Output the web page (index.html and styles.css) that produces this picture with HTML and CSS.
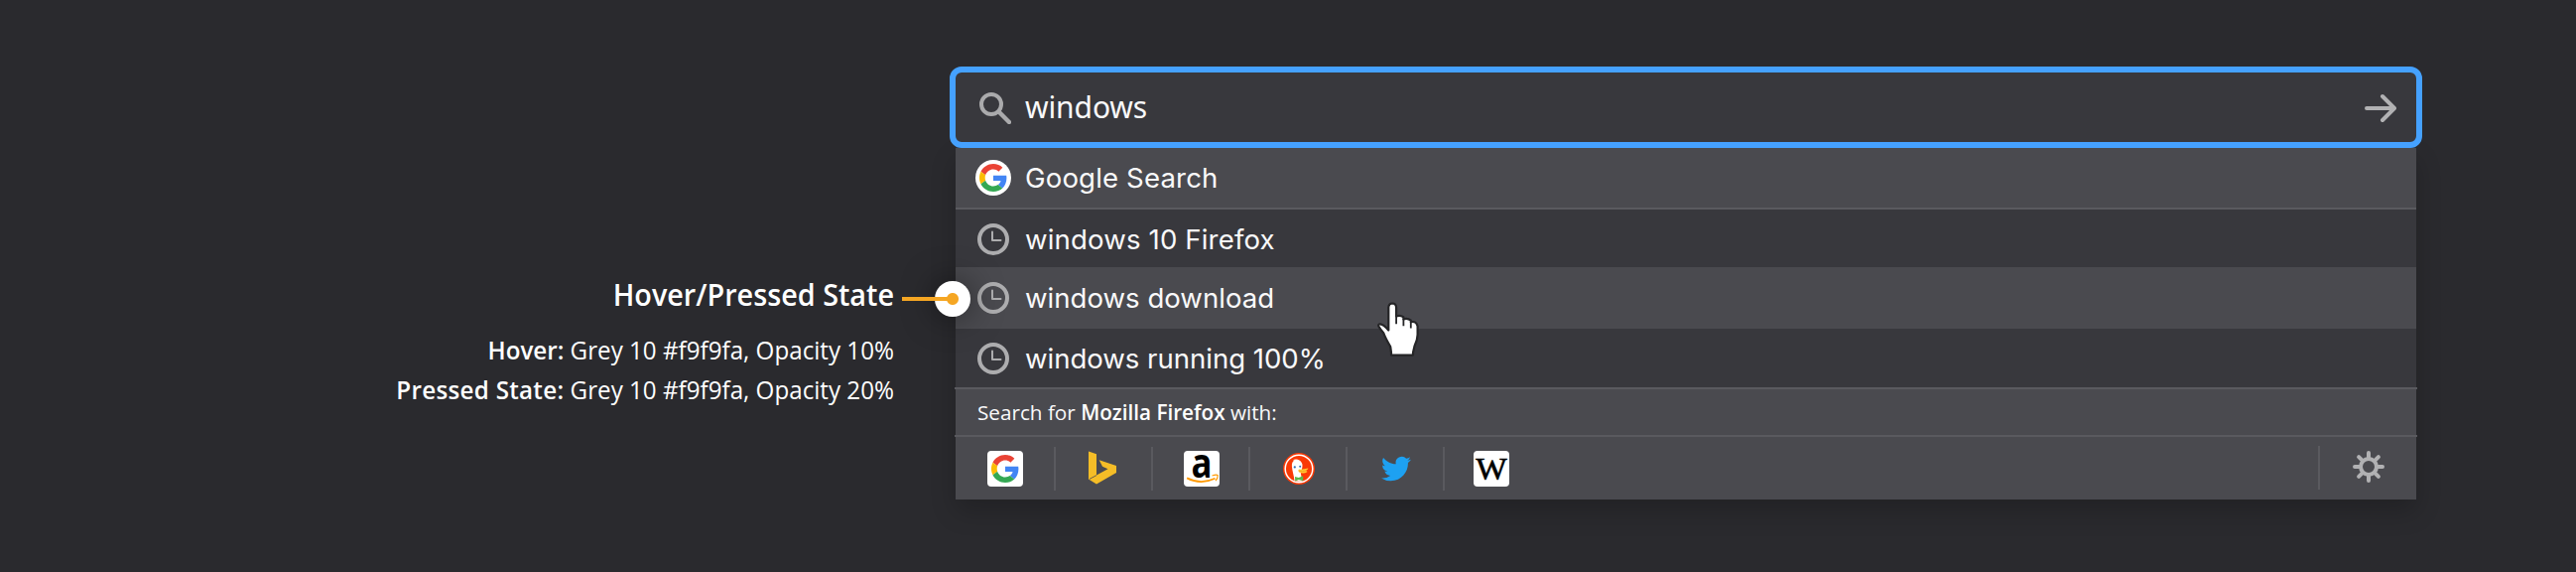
FILE: index.html
```
<!DOCTYPE html>
<html lang="en">
<head>
<meta charset="utf-8">
<title>Search suggestions: hover and pressed state</title>
<link rel="stylesheet" href="styles.css">
</head>
<body>
<svg width="0" height="0" class="defs">
  <defs>
    <symbol id="google" viewBox="0 0 48 48">
      <path fill="#ea4335" d="M24 9.5c3.54 0 6.71 1.22 9.21 3.6l6.85-6.85C35.9 2.38 30.47 0 24 0 14.62 0 6.51 5.38 2.56 13.22l7.98 6.19C12.43 13.72 17.74 9.5 24 9.5z"/>
      <path fill="#4285f4" d="M46.98 24.55c0-1.57-.15-3.09-.38-4.55H24v9.02h12.94c-.58 2.96-2.26 5.48-4.78 7.18l7.73 6c4.51-4.18 7.09-10.36 7.09-17.65z"/>
      <path fill="#fbbc05" d="M10.53 28.59c-.48-1.45-.76-2.99-.76-4.59s.27-3.14.76-4.59l-7.98-6.19C.92 16.46 0 20.12 0 24c0 3.88.92 7.54 2.56 10.78l7.97-6.19z"/>
      <path fill="#34a853" d="M24 48c6.48 0 11.93-2.13 15.89-5.81l-7.73-6c-2.15 1.45-4.92 2.3-8.16 2.3-6.26 0-11.57-4.22-13.47-9.91l-7.98 6.19C6.51 42.62 14.62 48 24 48z"/>
    </symbol>
    <symbol id="clock" viewBox="0 0 32 32">
      <circle cx="16" cy="16" r="14" fill="none" stroke="#adadaf" stroke-width="4"/>
      <path d="M15 8.5V17H23.5" fill="none" stroke="#adadaf" stroke-width="2" stroke-linecap="round" stroke-linejoin="round"/>
    </symbol>
  </defs>
</svg>
<main class="stage">
  <section class="note">
    <h1 class="note-title">Hover/Pressed State</h1>
    <p class="note-line"><b>Hover:</b> Grey 10 #f9f9fa, Opacity 10%</p>
    <p class="note-line"><b>Pressed State:</b> Grey 10 #f9f9fa, Opacity 20%</p>
  </section>
  <section class="search">
    <div class="searchbox">
      <svg class="icon" viewBox="0 0 32 32"><circle cx="12" cy="12" r="10" fill="none" stroke="#aaaaac" stroke-width="4"/><path d="M19.3 19.3L30 30" stroke="#aaaaac" stroke-width="4.4" stroke-linecap="round"/></svg>
      <span class="query">windows</span>
      <svg class="icon" viewBox="0 0 32 32"><path d="M2 16H29M18 4L30 16L18 28" fill="none" stroke="#b1b1b3" stroke-width="4" stroke-linecap="round" stroke-linejoin="round"/></svg>
    </div>
    <div class="panel">
      <div class="row row-engine"><span class="disc"><svg class="g" viewBox="0 0 48 48"><use href="#google"/></svg></span><span>Google Search</span></div>
      <div class="row row-first"><svg class="icon"><use href="#clock"/></svg><span>windows 10 Firefox</span></div>
      <div class="row row-hover"><svg class="icon"><use href="#clock"/></svg><span>windows download</span></div>
      <div class="row row-last"><svg class="icon"><use href="#clock"/></svg><span>windows running 100%</span></div>
      <div class="rule"></div>
      <div class="heading"><span>Search for <b>Mozilla Firefox</b> with:</span></div>
      <div class="rule"></div>
      <div class="engines">
        <div class="engine early"><span class="tile"><svg class="g" viewBox="0 0 48 48"><use href="#google"/></svg></span></div>
        <div class="engine early"><svg class="logo" viewBox="0 0 36 36"><path fill="#f5bd27" d="M4 .5L12 3.2V24.6L23.5 18.2L18 15.8L14.7 9.2L32 15V22L12 33.6L4 28.6Z"/><path d="M12 24.6L5 28.4" stroke="#4a4a4f" stroke-width=".8"/></svg></div>
        <div class="engine late"><span class="tile"><svg class="logo" viewBox="0 0 36 36"><text x="7.4" y="27" textLength="21" lengthAdjust="spacingAndGlyphs" class="amazon">a</text><path d="M3.2 27.4Q17 34.6 31.5 27.8" fill="none" stroke="#ff9900" stroke-width="1.8"/><path d="M28.5 25Q33 23.6 34.2 24.6Q34.4 27.6 32 30.2" fill="none" stroke="#ff9900" stroke-width="1.2"/></svg></span></div>
        <div class="engine late"><svg class="logo" viewBox="0 0 36 36">
          <circle cx="18" cy="18" r="16" fill="#f93a06"/><circle cx="18" cy="18" r="13.8" fill="none" stroke="#fff" stroke-width="1.5"/>
          <path fill="#fff" d="M13.4 29.8C13 25 11.2 20 10.9 15.6C10.6 12 12 10.3 13.6 9.8L11.9 9.2C15.2 7.4 20.6 9.4 21.4 13.6C21.9 16.2 20.8 19.5 19.8 22L21.3 30.4Q17.2 31.4 13.4 29.8Z"/>
          <path fill="#ffcc33" d="M18.1 18.6Q23 18.8 27.2 17.6Q28 18.5 24.6 20.1Q27 20.4 26.3 21.3Q22.6 23.6 18 21.5Q16.4 19.7 18.1 18.6Z"/>
          <path d="M18 20.3Q21.5 20.9 25 20.1" fill="none" stroke="#f29b1c" stroke-width=".8"/>
          <circle cx="13.8" cy="16.4" r="1.1" fill="#2d6eb5"/><circle cx="19.2" cy="15.8" r="1" fill="#2d6eb5"/>
          <path fill="#5cb84a" d="M14 26L17.7 27L22.2 25.3V30.3L17.8 29L14.2 30.5Z"/>
        </svg></div>
        <div class="engine late"><svg class="bird" viewBox="0 0 24 24"><path fill="#1da1f2" d="M23.953 4.57a10 10 0 01-2.825.775 4.958 4.958 0 002.163-2.723c-.951.555-2.005.959-3.127 1.184a4.92 4.92 0 00-8.384 4.482C7.69 8.095 4.067 6.13 1.64 3.162a4.822 4.822 0 00-.666 2.475c0 1.71.87 3.213 2.188 4.096a4.904 4.904 0 01-2.228-.616v.06a4.923 4.923 0 003.946 4.827 4.996 4.996 0 01-2.212.085 4.936 4.936 0 004.604 3.417 9.867 9.867 0 01-6.102 2.105c-.39 0-.779-.023-1.17-.067a13.995 13.995 0 007.557 2.209c9.053 0 13.998-7.496 13.998-13.985 0-.21 0-.42-.015-.63A9.935 9.935 0 0024 4.59z"/></svg></div>
        <div class="engine early"><span class="tile"><svg class="logo" viewBox="0 0 36 36"><text x="18" y="29" text-anchor="middle" textLength="31.5" lengthAdjust="spacingAndGlyphs" class="wiki">W</text></svg></span></div>
        <div class="settings"><svg class="icon" viewBox="0 0 32 32"><g fill="none" stroke="#b1b1b3" stroke-width="4"><circle cx="16" cy="16" r="8"/><path stroke-linecap="round" d="M16 2V7M16 25V30M2 16H7M25 16H30M6.1 6.1L9.6 9.6M22.4 22.4L25.9 25.9M6.1 25.9L9.6 22.4M22.4 9.6L25.9 6.1"/></g></svg></div>
      </div>
    </div>
  </section>
  <div class="callout"></div>
  <svg class="pointer" viewBox="0 0 46 60"><path fill="#fff" stroke="#252527" stroke-width="2.2" stroke-linejoin="round" d="M15 51L14.2 45Q9 36 7.4 31.5Q4 27.5 2.3 24.5Q1.6 22.2 4 22.3Q8 23 12.3 28.5V5.5Q12.6 1.6 16.2 1.5Q19.8 1.6 20.1 5.5V14.5Q23.5 12.8 27.4 15.2V17.4Q31.5 16 34.8 18.7V20.3Q40.3 18.8 41.6 24.5V33Q41.5 38.5 38.5 44.5L37 51V53.6H15Z"/><path d="M20.1 14V22.3M27.4 17V24.3M34.8 20V26.5" stroke="#252527" stroke-width="1.8"/></svg>
</main>
</body>
</html>
```
FILE: styles.css
```
* { box-sizing: border-box; margin: 0; padding: 0; }
body { background: #2a2a2e; color: #f9f9fa; font-family: Inter, "Noto Sans", sans-serif; overflow: hidden; }
.defs { position: absolute; }
.stage { position: relative; width: 2596px; height: 576px; display: flex; align-items: flex-start; }

.note { width: 901px; padding-top: 277px; text-align: right; color: #fff; font-family: "Open Sans", sans-serif; white-space: nowrap; }
.note-title { margin-bottom: 15px; font-size: 30px; line-height: 40px; font-weight: 600; transform: scaleX(.959); transform-origin: right; }
.note-line { font-size: 26px; line-height: 40px; transform: scaleX(.93); transform-origin: right; }
.note-line b { font-weight: 600; }
.note-line:last-child b { letter-spacing: .3px; }

.search { width: 1484px; margin: 67px 0 0 56px; }
.searchbox { position: relative; z-index: 1; display: flex; align-items: center; height: 82px; padding: 2px 20px 0 24px; border: 6px solid #45a1ff; border-radius: 12px; background: #38383d; }
.icon { display: block; flex: none; width: 32px; height: 32px; }
.query { margin: -4px auto 0 14px; font: 30px "Noto Sans", sans-serif; letter-spacing: -.1px; }

.panel { margin: 0 6px; background: #38383d; box-shadow: 0 12px 24px rgba(0, 0, 0, .2); }
.row { display: flex; align-items: center; gap: 16px; padding-left: 22px; font-size: 27.6px; white-space: nowrap; }
.row-engine { height: 62px; padding-left: 20px; gap: 14px; letter-spacing: .14px; background: #4a4a4f; border-bottom: 2px solid #5a5a5f; }
.row-first { height: 58px; padding-top: 2px; letter-spacing: .14px; }
.row-hover { height: 62px; background: #4a4a4f; }
.row-last { height: 59px; padding-top: 1px; letter-spacing: -.04px; }
.disc, .tile { display: grid; place-items: center; width: 36px; height: 36px; background: #fff; }
.disc { border-radius: 50%; }
.tile { border-radius: 4px; }
.g { width: 28px; height: 28px; display: block; }
.rule { height: 2px; margin: 0 -1px; background: #5a5a5f; }
.heading { display: flex; align-items: center; height: 46px; padding-left: 22px; background: #4a4a4f; font: 20.7px "Open Sans", sans-serif; }
.heading b { font-weight: 600; color: #fff; }

.engines { display: flex; height: 63px; padding: 10px 0 9px 3px; background: #4a4a4f; }
.engine { display: grid; place-items: center; width: 98px; border-right: 2px solid #5a5a5f; }
.engine:nth-child(6) { border-right-color: transparent; }
.early { padding-right: 2px; }
.late { padding-left: 2px; }
.logo { display: block; width: 36px; height: 36px; overflow: visible; }
.bird { display: block; width: 30px; height: 30px; }
.amazon { font: bold 41px "Open Sans", sans-serif; }
.wiki { font: 32px "Liberation Serif", serif; stroke: #000; stroke-width: .6px; }
.settings { display: grid; place-items: center; width: 99px; height: 44px; margin: -1px 0 0 auto; padding-bottom: 2px; border-left: 2px solid #5a5a5f; }

/* Leader line and dot that mark the highlighted row */
.callout { position: absolute; z-index: 2; left: 942px; top: 283px; width: 36px; height: 36px; border-radius: 50%; background: radial-gradient(circle, #f5a623 5.5px, #fff 6.5px); box-shadow: 0 0 32px rgba(0, 0, 0, .5); }
.callout::before { content: ""; position: absolute; left: -33px; top: 16px; width: 51px; height: 4px; background: #f5a623; }
.pointer { position: absolute; z-index: 2; left: 1387px; top: 304px; width: 46px; height: 60px; }
```
